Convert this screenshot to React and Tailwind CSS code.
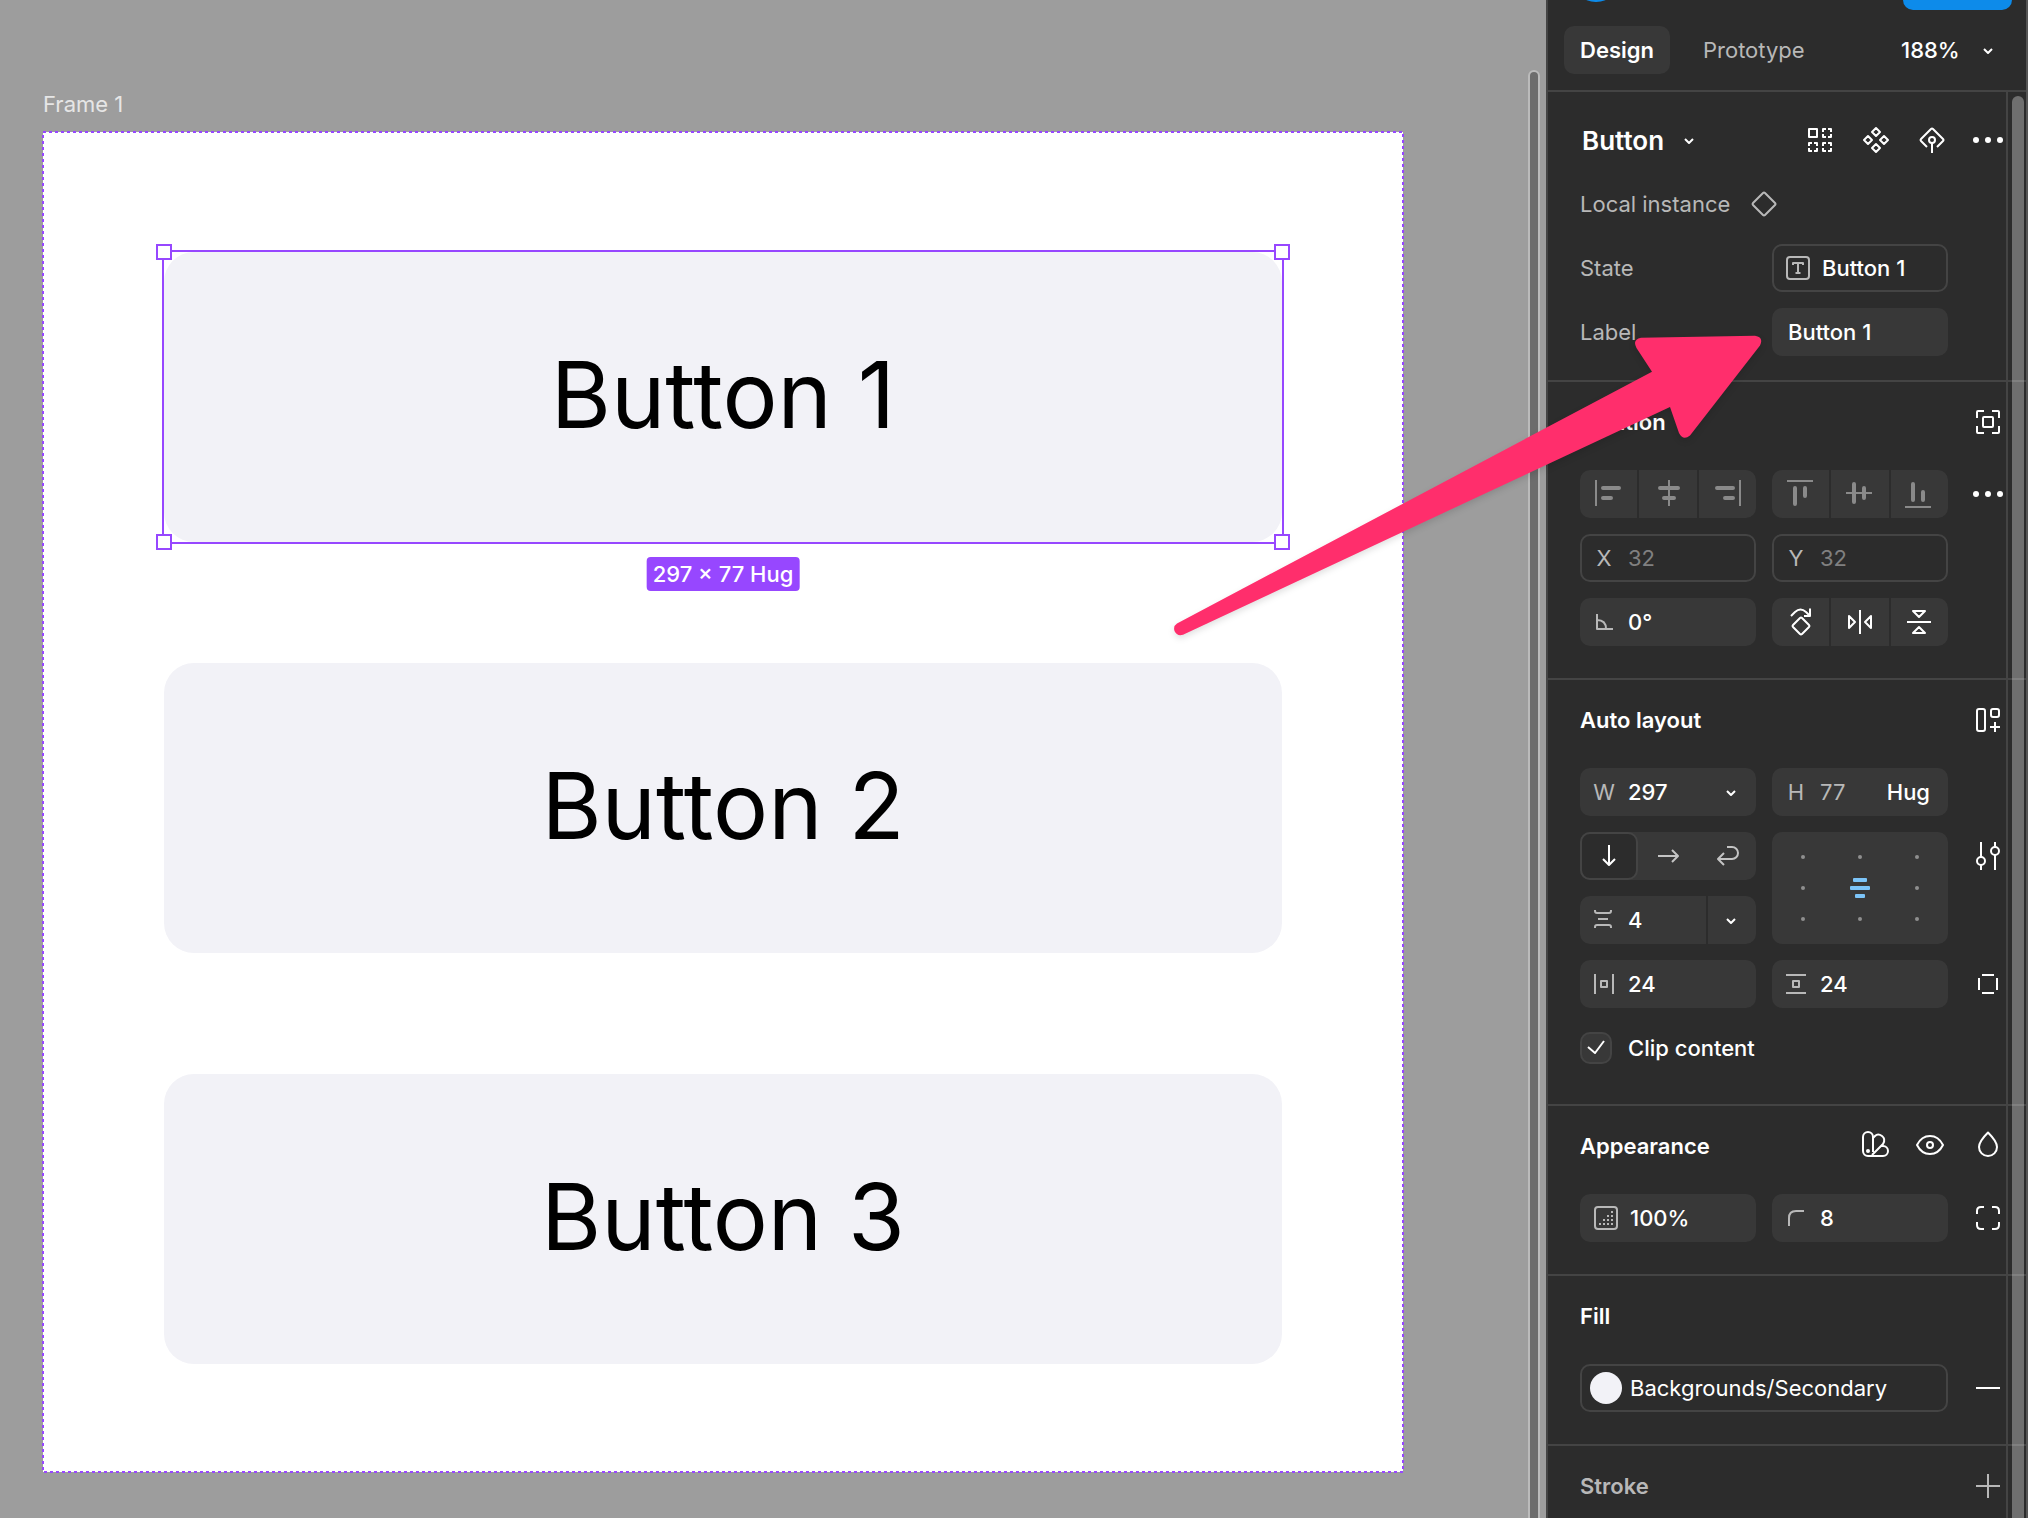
/**
 * Design editor
 *
 * Canvas with a selected component instance and the properties panel beside it.
 */

import clsx from 'clsx';

const BUTTONS = ['Button 1', 'Button 2', 'Button 3'];

const HANDLES = [
  '-left-2 -top-2',
  '-right-2 -top-2',
  '-left-2 -bottom-2',
  '-right-2 -bottom-2',
];

// Line icons, all drawn on a 32px box
const ICONS = {
  variants: (
    <>
      <rect x="5" y="5" width="8" height="8" />
      <path d="M19 5h8v8h-8zM5 19h8v8H5zM19 19h8v8h-8z" strokeDasharray="6 2" strokeDashoffset="3" />
    </>
  ),
  component: (
    <path d="M16 4l4 4-4 4-4-4zM16 20l4 4-4 4-4-4zM8 12l4 4-4 4-4-4zM24 12l4 4-4 4-4-4z" />
  ),
  mainComponent: (
    <>
      <path d="M11 23l-6-6q-1-1 0-2L15 5q1-1 2 0l10 10q1 1 0 2l-6 6" />
      <circle cx="16" cy="16" r="3" />
      <path d="M16 19v10" />
    </>
  ),
  instance: <path d="M15 5q1-1 2 0l10 10q1 1 0 2L17 27q-1 1-2 0L5 17q-1-1 0-2z" />,
  more: (
    <g fill="currentColor" stroke="none">
      <circle cx="4" cy="16" r="3" />
      <circle cx="16" cy="16" r="3" />
      <circle cx="28" cy="16" r="3" />
    </g>
  ),
  textVariable: (
    <>
      <rect x="5" y="5" width="22" height="22" rx="3" />
      <path d="M11 13v-2h10v2M16 11v10M13.5 21h5" />
    </>
  ),
  focus: (
    <>
      <path d="M5 12V6q0-1 1-1h6M20 5h6q1 0 1 1v6M27 20v6q0 1-1 1h-6M12 27H6q-1 0-1-1v-6" />
      <rect x="11" y="11" width="10" height="10" rx="1" />
    </>
  ),
  alignLeft: (
    <>
      <path d="M3 2v26" />
      <path d="M10 10h16M10 20h8" strokeWidth="4" strokeLinecap="round" />
    </>
  ),
  alignCenterX: (
    <>
      <path d="M17 2v26" />
      <path d="M8 10h18M12 20h10" strokeWidth="4" strokeLinecap="round" />
    </>
  ),
  alignRight: (
    <>
      <path d="M29 2v26" />
      <path d="M6 10h16M14 20h8" strokeWidth="4" strokeLinecap="round" />
    </>
  ),
  alignTop: (
    <>
      <path d="M2 3h26" />
      <path d="M10 10v16M20 10v8" strokeWidth="4" strokeLinecap="round" />
    </>
  ),
  alignCenterY: (
    <>
      <path d="M2 15h26" />
      <path d="M10 6v18M20 10v10" strokeWidth="4" strokeLinecap="round" />
    </>
  ),
  alignBottom: (
    <>
      <path d="M2 29h26" />
      <path d="M10 6v16M20 14v8" strokeWidth="4" strokeLinecap="round" />
    </>
  ),
  angle: <path d="M9 8v15h16M9 14q9 0 9 9" />,
  rotate: (
    <>
      <path d="M15 12q1-1 2 0l7 7q1 1 0 2l-7 7q-1 1-2 0l-7-7q-1-1 0-2z" />
      <path d="M6 10l4-4q5.5-5 11 0l4 4M25 2.5V10h-6" />
    </>
  ),
  flipX: <path d="M16 4v24M5 10v12l6-6zM27 10v12l-6-6z" />,
  flipY: <path d="M4 16h24M10 5h12l-6 6zM10 27h12l-6-6z" />,
  autoLayout: (
    <>
      <rect x="5" y="5" width="8" height="22" rx="2" />
      <rect x="19" y="5" width="8" height="8" rx="2" />
      <path d="M18 23h10M23 18v10" />
    </>
  ),
  arrowDown: <path d="M16 5v20M10 19l6 6 6-6" />,
  arrowRight: <path d="M6 16h20M20 10l6 6-6 6" />,
  wrap: <path d="M16 7h5a6 6 0 0 1 0 12H7M13 13l-6 6 6 6" />,
  sliders: (
    <>
      <path d="M9 2v15M9 25v5M23 2v5M23 15v15" />
      <circle cx="9" cy="21" r="4" />
      <circle cx="23" cy="11" r="4" />
    </>
  ),
  gap: (
    <path d="M7 6v1q0 2 2 2h12q2 0 2-2V6M10 15h10M7 24v-1q0-2 2-2h12q2 0 2 2v1" />
  ),
  paddingX: <path d="M7 6v20M25 6v20M13 13h6v6h-6z" />,
  paddingY: <path d="M6 7h20M6 25h20M13 13h6v6h-6z" />,
  paddingSides: <path d="M10 7h12M10 25h12M7 10v12M25 10v12" />,
  swatches: (
    <>
      <path d="M13 22V7A5 5 0 0 0 3 7v14a5 5 0 0 0 5 5h15a5 5 0 0 0 0-10h-2" />
      <path d="M13 8l2-2q3-3 7 0t1 8L12 25" />
      <circle cx="8" cy="21" r="2" fill="currentColor" stroke="none" />
    </>
  ),
  eye: (
    <>
      <path d="M1 15c3-6 7.5-9 13-9s10 3 13 9c-3 6-7.5 9-13 9s-10-3-13-9z" />
      <circle cx="14" cy="15" r="3" />
    </>
  ),
  drop: <path d="M16 2.5c5 5 9 9.5 9 14.5a9 9 0 0 1-18 0c0-5 4-9.5 9-14.5z" />,
  opacity: (
    <>
      <rect x="5" y="5" width="22" height="22" rx="3" />
      <path
        d="M21 10h2M17 14h2M21 14h2M13 18h2M17 18h2M21 18h2M9 22h2M13 22h2M17 22h2M21 22h2"
      />
    </>
  ),
  radius: <path d="M9 24v-8q0-7 7-7h8" />,
  corners: (
    <path d="M5 12V9q0-4 4-4h3M20 5h3q4 0 4 4v3M27 20v3q0 4-4 4h-3M12 27H9q-4 0-4-4v-3" />
  ),
  minus: <path d="M4 16h24" />,
  plus: <path d="M4 16h24M16 4v24" />,
  chevron: <path d="M11 15l4 4 4-4" />,
  check: <path d="M8 15l7 6 9-12" />,
};

function Icon({ name, className = '' }) {
  return (
    <svg
      viewBox="0 0 32 32"
      className={clsx('size-8 shrink-0', className)}
      fill="none"
      stroke="currentColor"
      strokeWidth="2"
      strokeLinejoin="round"
      aria-hidden="true"
    >
      {ICONS[name]}
    </svg>
  );
}

function IconButton({ icon, label, className = '' }) {
  return (
    <button type="button" aria-label={label} className={clsx('flex items-center justify-center', className)}>
      <Icon name={icon} />
    </button>
  );
}

function Section({ title, muted = false, actions, children }) {
  return (
    <section className={clsx('border-b-2 border-[#444444] pl-8', children && 'pb-6')}>
      <div className="flex h-20 w-[424px] items-center justify-between">
        <h2 className={clsx('font-semibold', muted && 'text-[#b8b8b8]')}>{title}</h2>
        <div className={clsx('flex gap-6', muted && 'text-[#b8b8b8]')}>{actions}</div>
      </div>
      {children}
    </section>
  );
}

// Two equal columns and a narrow one for the trailing icon
function Row({ children }) {
  return (
    <div className="grid min-h-16 grid-cols-[176px_176px_48px] items-center gap-x-4">
      {children}
    </div>
  );
}

function Field({ label, prefix, icon, value, outlined = false, wide = false, dim, children }) {
  return (
    <div
      className={clsx(
        'flex h-12 items-center rounded-[10px]',
        outlined ? 'bg-[#2c2c2c] ring-2 ring-inset ring-[#444444]' : 'bg-[#383838]'
      )}
    >
      <label className="flex h-full min-w-0 flex-1 items-center">
        <span
          className={clsx(
            'flex shrink-0 items-center justify-center text-[#b8b8b8]',
            wide ? 'w-[50px] pl-[2px]' : 'w-12'
          )}
        >
          {icon ? <Icon name={icon} /> : prefix}
        </span>
        <input
          type="text"
          aria-label={label}
          defaultValue={value}
          className={clsx('w-full min-w-0 bg-transparent outline-none', dim || 'font-medium text-white')}
        />
      </label>
      {children}
    </div>
  );
}

function ButtonGroup({ items, muted = false }) {
  return (
    <div className={clsx('flex h-12 gap-[2px] overflow-hidden rounded-[10px]', muted && 'text-[#8a8a8a]')}>
      {items.map(([icon, label]) => (
        <IconButton key={icon} icon={icon} label={label} className="flex-1 bg-[#383838]" />
      ))}
    </div>
  );
}

function AlignmentGrid() {
  return (
    <div className="grid h-28 grid-cols-3 grid-rows-3 place-items-center rounded-[10px] bg-[#383838] px-[2px] py-[10px]">
      {Array.from({ length: 9 }, (_, i) =>
        i === 4 ? (
          <span key={i} className="flex flex-col items-center gap-1">
            <span className="h-1 w-[14px] rounded-[1px] bg-[#7cc4f8]" />
            <span className="h-1 w-5 rounded-[1px] bg-[#7cc4f8]" />
            <span className="h-1 w-[10px] rounded-[1px] bg-[#7cc4f8]" />
          </span>
        ) : (
          <span key={i} className="size-1 rounded-full bg-[#8f8f8f]" />
        )
      )}
    </div>
  );
}

function Selection({ size }) {
  return (
    <div className="absolute inset-0 outline-2 outline-[#9747ff]">
      {HANDLES.map((position) => (
        <span key={position} className={clsx('absolute size-4 border-2 border-[#9747ff] bg-white', position)} />
      ))}
      <span className="absolute left-1/2 top-full mt-[15px] flex h-[34px] -translate-x-1/2 items-center whitespace-nowrap rounded-[4px] bg-[#9747ff] px-[6px] text-[22px] font-medium text-white">
        {size}
      </span>
    </div>
  );
}

function Canvas() {
  return (
    <main className="relative min-w-0 flex-1 bg-[#9d9d9d] pl-[43px] pr-[143px] pt-[89px]">
      <p className="h-[43px] text-[22px] leading-[30px] text-[#e6e6e6]">Frame 1</p>
      <div className="relative flex flex-col gap-[121px] bg-white px-[121px] pb-[108px] pt-[120px]">
        <svg className="absolute inset-0 size-full overflow-visible" fill="none" aria-hidden="true">
          <rect width="100%" height="100%" stroke="#9747ff" strokeWidth="2" strokeDasharray="3 3" />
        </svg>
        {BUTTONS.map((label, i) => (
          <div
            key={label}
            className="relative flex h-[290px] items-center justify-center rounded-[30px] bg-[#f2f2f7] pb-1 text-[92px] text-black"
          >
            {label}
            {i === 0 && <Selection size="297 × 77 Hug" />}
          </div>
        ))}
      </div>
      <div className="absolute -bottom-4 right-[6px] top-[70px] w-3 rounded-full border-2 border-[#bbbbbb] bg-[#6c6c6c]" />
    </main>
  );
}

function PanelHeader() {
  return (
    <header className="border-b-2 border-[#444444]">
      <div className="flex h-[10px] items-end justify-between pl-6 pr-4">
        <span className="mb-2 size-12 rounded-full bg-[#0d8bea]" />
        <button type="button" aria-label="Share" className="h-12 w-[109px] rounded-[10px] bg-[#0d8bea]" />
      </div>
      <div className="flex h-20 items-center pl-4">
        <button type="button" className="h-12 rounded-[10px] bg-[#383838] px-4 font-semibold">
          Design
        </button>
        <button type="button" className="ml-[17px] h-12 px-4 text-[#b8b8b8]">
          Prototype
        </button>
        <div className="relative ml-auto mr-[23px] w-[104px]">
          <select aria-label="Zoom" className="w-full appearance-none bg-transparent font-medium outline-none">
            <option>188%</option>
          </select>
          <Icon name="chevron" className="pointer-events-none absolute right-0 top-1/2 -translate-y-1/2" />
        </div>
      </div>
    </header>
  );
}

function InstanceSection() {
  return (
    <section className="border-b-2 border-[#444444] pb-4 pl-8 pt-4">
      <div className="flex h-16 w-[424px] items-center justify-between">
        <button type="button" className="flex items-center gap-[10px] pl-[2px] text-[26px] font-semibold">
          Button
          <Icon name="chevron" />
        </button>
        <div className="flex gap-6">
          <IconButton icon="variants" label="Variants" />
          <IconButton icon="component" label="Swap component" />
          <IconButton icon="mainComponent" label="Go to main component" />
          <IconButton icon="more" label="More" />
        </div>
      </div>
      <div className="flex h-16 items-center gap-[18px] text-[#b8b8b8]">
        Local instance
        <Icon name="instance" />
      </div>
      <Row>
        <span className="text-[#b8b8b8]">State</span>
        <button
          type="button"
          className="flex h-12 items-center gap-2 rounded-[10px] border-2 border-[#444444] px-2 font-medium"
        >
          <Icon name="textVariable" className="text-[#b8b8b8]" />
          Button 1
        </button>
      </Row>
      <Row>
        <label htmlFor="label" className="text-[#b8b8b8]">
          Label
        </label>
        <input
          id="label"
          type="text"
          defaultValue="Button 1"
          className="h-12 min-w-0 rounded-[10px] bg-[#383838] px-4 font-medium outline-none"
        />
      </Row>
    </section>
  );
}

function PositionSection() {
  return (
    <Section title="Position" actions={<IconButton icon="focus" label="Absolute position" />}>
      <Row>
        <ButtonGroup
          muted
          items={[
            ['alignLeft', 'Align left'],
            ['alignCenterX', 'Align horizontal centers'],
            ['alignRight', 'Align right'],
          ]}
        />
        <ButtonGroup
          muted
          items={[
            ['alignTop', 'Align top'],
            ['alignCenterY', 'Align vertical centers'],
            ['alignBottom', 'Align bottom'],
          ]}
        />
        <IconButton icon="more" label="More alignment" />
      </Row>
      <Row>
        <Field prefix="X" label="X position" value="32" outlined dim="text-[#808080]" />
        <Field prefix="Y" label="Y position" value="32" outlined dim="text-[#808080]" />
      </Row>
      <Row>
        <Field icon="angle" label="Rotation" value="0°" />
        <ButtonGroup
          items={[
            ['rotate', 'Rotate 90°'],
            ['flipX', 'Flip horizontal'],
            ['flipY', 'Flip vertical'],
          ]}
        />
      </Row>
    </Section>
  );
}

function AutoLayoutSection() {
  return (
    <Section title="Auto layout" actions={<IconButton icon="autoLayout" label="Auto layout settings" />}>
      <Row>
        <Field prefix="W" label="Width" value="297">
          <IconButton icon="chevron" label="Width mode" className="w-12" />
        </Field>
        <Field prefix="H" label="Height" value="77" dim="text-[#b8b8b8]">
          <button type="button" className="pr-[18px] font-medium">
            Hug
          </button>
        </Field>
      </Row>
      <div className="grid grid-cols-[176px_176px_48px] gap-x-4 py-2">
        <div className="flex flex-col gap-4">
          <div className="flex h-12 rounded-[10px] bg-[#383838] text-[#c4c4c4]">
            <IconButton
              icon="arrowDown"
              label="Vertical"
              className="w-[58px] rounded-[10px] border-2 border-[#444444] bg-[#2c2c2c] text-white"
            />
            <IconButton icon="arrowRight" label="Horizontal" className="flex-1" />
            <IconButton icon="wrap" label="Wrap" className="flex-1" />
          </div>
          <div className="flex gap-[2px] overflow-hidden rounded-[10px]">
            <div className="flex h-12 flex-1 items-center bg-[#383838]">
              <label htmlFor="gap" className="flex w-12 shrink-0 justify-center text-[#b8b8b8]">
                <Icon name="gap" />
              </label>
              <input
                id="gap"
                type="text"
                aria-label="Gap"
                defaultValue="4"
                className="w-full min-w-0 bg-transparent font-medium outline-none"
              />
            </div>
            <IconButton icon="chevron" label="Gap mode" className="w-12 bg-[#383838]" />
          </div>
        </div>
        <AlignmentGrid />
        <IconButton icon="sliders" label="Advanced layout" className="h-12" />
      </div>
      <Row>
        <Field icon="paddingX" label="Horizontal padding" value="24" />
        <Field icon="paddingY" label="Vertical padding" value="24" />
        <IconButton icon="paddingSides" label="Individual padding" />
      </Row>
      <label className="flex h-16 items-center gap-4 font-medium">
        <span className="relative flex">
          <input
            type="checkbox"
            defaultChecked
            className="size-8 appearance-none rounded-[10px] border-2 border-[#444444] bg-[#383838]"
          />
          <Icon name="check" className="pointer-events-none absolute inset-0" />
        </span>
        Clip content
      </label>
    </Section>
  );
}

function AppearanceSection() {
  return (
    <Section
      title="Appearance"
      actions={
        <>
          <IconButton icon="swatches" label="Styles" />
          <IconButton icon="eye" label="Visibility" />
          <IconButton icon="drop" label="Blend mode" />
        </>
      }
    >
      <Row>
        <Field icon="opacity" label="Opacity" value="100%" wide />
        <Field icon="radius" label="Corner radius" value="8" />
        <IconButton icon="corners" label="Individual corners" />
      </Row>
    </Section>
  );
}

function FillSection() {
  return (
    <Section title="Fill">
      <div className="flex h-16 items-center gap-6">
        <button
          type="button"
          className="flex h-12 w-[368px] items-center gap-2 rounded-[10px] border-2 border-[#444444] px-2"
        >
          <span className="size-8 rounded-full bg-[#f2f2f7]" />
          Backgrounds/Secondary
        </button>
        <IconButton icon="minus" label="Remove fill" />
      </div>
    </Section>
  );
}

function PropertiesPanel() {
  return (
    <aside className="relative w-[482px] shrink-0 border-l-2 border-[#444444] bg-[#2c2c2c] text-[22px] text-white">
      <PanelHeader />
      <InstanceSection />
      <PositionSection />
      <AutoLayoutSection />
      <AppearanceSection />
      <FillSection />
      <Section title="Stroke" muted actions={<IconButton icon="plus" label="Add stroke" />} />
      {/* Scrollbar */}
      <div className="absolute bottom-0 right-0 top-[92px] w-[22px] border-l-2 border-[#444444]">
        <div className="absolute -bottom-4 left-1 top-1 w-3 rounded-full bg-white/32" />
      </div>
      <div className="absolute inset-y-0 right-0 w-[2px] bg-[#555555]" />
    </aside>
  );
}

function Arrow() {
  return (
    <svg
      viewBox="1168 328 600 320"
      className="pointer-events-none absolute right-[260px] top-[328px] h-[320px] w-[600px] overflow-visible drop-shadow-md"
      aria-hidden="true"
    >
      <path
        d="M1177 623.5L1652 371.7L1636.5 348Q1632 339.5 1641 337.7L1755 335.7Q1764 337 1760 345.5L1690 435.5Q1683 441 1679 433L1670 407L1183 634.7Q1177 636.5 1174.5 631Q1173 626 1177 623.5Z"
        fill="#ff2e6c"
      />
    </svg>
  );
}

export default function App() {
  return (
    <div className="relative flex h-screen overflow-hidden font-['Inter',sans-serif]">
      <Canvas />
      <PropertiesPanel />
      <Arrow />
    </div>
  );
}
